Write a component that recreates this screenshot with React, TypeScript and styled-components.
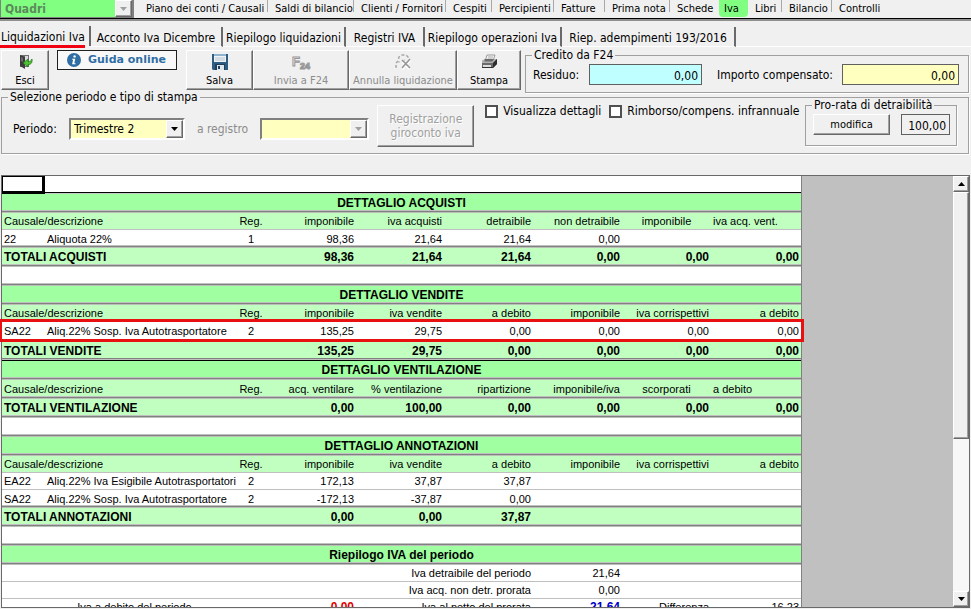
import React from "react";
import styled, { createGlobalStyle, css } from "styled-components";

const UI_FONT = `"DejaVu Sans Condensed", "DejaVu Sans", sans-serif`;
const GRID_FONT = `"Liberation Sans", Arial, sans-serif`;

const GlobalStyle = createGlobalStyle`
  *, *::before, *::after { box-sizing: border-box; }
  body { margin: 0; background: #f0f0f0; color: #000; font: 12px/16px ${UI_FONT}; }
  button, input, select { font: inherit; color: inherit; border-radius: 0; margin: 0; }
`;

const raised = css`
  border: 1px solid;
  border-color: #fff #696969 #696969 #fff;
  box-shadow: inset -1px -1px 0 #a0a0a0;
  background: #f0f0f0;
`;

const Page = styled.main`
  height: 100vh;
  display: flex;
  flex-direction: column;
  overflow: hidden;
`;

/* ---- top navigation ---- */

const TopBar = styled.header`
  display: flex;
  height: 21px;
  padding-bottom: 3px;
  border-bottom: 2px solid #909090;
  box-shadow: inset 0 -1px 0 #000;
  flex: none;
`;

const SelectBox = styled.div<{ $width: number }>`
  position: relative;
  width: ${(p) => p.$width}px;
  height: 22px;
  flex: none;
`;

const Select = styled.select`
  appearance: none;
  width: 100%;
  height: 100%;
  padding: 0 20px 0 3px;
  border: 2px solid;
  border-color: #808080 #fff #fff #808080;
  background: #ffffc0;
  opacity: 1;
`;

const SelectArrow = styled.span<{ $muted?: boolean }>`
  ${raised}
  position: absolute;
  top: 2px;
  right: 2px;
  bottom: 2px;
  width: 17px;
  display: grid;
  place-items: center;
  pointer-events: none;
  color: ${(p) => (p.$muted ? "#a0a0a0" : "#000")};
`;

const SectionBox = styled(SelectBox)`
  height: 18px;
`;

const SectionSelect = styled(Select)`
  border-width: 0 2px 1px 1px;
  border-color: #808080;
  background: #80ff80;
  color: #5c8a5c;
  font-weight: bold;
  padding-left: 4px;
`;

const SectionArrow = styled(SelectArrow)`
  top: 0;
  bottom: 1px;
`;

const MainNav = styled.nav`
  display: grid;
  grid-template-columns: 129px 86px 92px 46px 62px 51px 65px 49px 29px 34px 50px 60px;
  margin-left: 5px;
  font-size: 11px;
`;

const NavLink = styled.a<{ $active?: boolean; $divider?: boolean }>`
  position: relative;
  height: 17px;
  padding-left: ${(p) => (p.$active ? 5 : 7)}px;
  color: #000;
  text-decoration: none;
  white-space: nowrap;
  line-height: 17px;
  ${(p) =>
    p.$active &&
    css`
      background: #80ff80;
      border-radius: 0 0 4px 4px;
    `}
  ${(p) =>
    p.$divider &&
    css`
      &::after {
        content: "";
        position: absolute;
        top: 0;
        right: 0;
        width: 1px;
        height: 12px;
        background: #a8a8a8;
      }
    `}
`;

/* ---- secondary tabs ---- */

const TabBar = styled.nav`
  display: grid;
  grid-template-columns: 91px 132px 123px 79px 137px 174px 1fr;
  height: 28px;
  padding-top: 5px;
  flex: none;
`;

const Tab = styled.button<{ $active?: boolean }>`
  position: relative;
  height: 20px;
  margin-top: ${(p) => (p.$active ? 0 : 1)}px;
  padding: ${(p) => (p.$active ? "2px 0 0 1px" : "3px 0 0")};
  text-align: ${(p) => (p.$active ? "left" : "center")};
  border: 0;
  border-right: 2px solid #696969;
  border-bottom: ${(p) => (p.$active ? 0 : 1)}px solid #fff;
  background: #f0f0f0;
  line-height: 15px;
  white-space: nowrap;
  ${(p) =>
    p.$active &&
    css`
      &::after {
        content: "";
        position: absolute;
        left: 0;
        top: 19px;
        width: 85px;
        height: 3px;
        background: #f00010;
      }
    `}
`;

const TabFiller = styled.span`
  height: 20px;
  margin-top: 1px;
  border-bottom: 1px solid #fff;
`;

/* ---- toolbar ---- */

const Toolbar = styled.div`
  display: flex;
  align-items: flex-start;
  padding: 1px 2px 0 1px;
  flex: none;
`;

const ToolButton = styled.button<{ $width: number }>`
  ${raised}
  display: flex;
  flex-direction: column;
  align-items: center;
  justify-content: space-between;
  width: ${(p) => p.$width}px;
  height: 40px;
  padding: 3px 0 1px;
  font-size: 11px;
  line-height: 15px;
  white-space: nowrap;
  flex: none;
  &:disabled {
    color: #8c8c8c;
  }
`;

const GuideLink = styled.a`
  display: flex;
  align-items: center;
  gap: 7px;
  width: 120px;
  height: 20px;
  margin: 0 9px 0 8px;
  padding-left: 9px;
  border: 1px solid #202020;
  background: #f8f8f8;
  color: #2f6ea5;
  font: bold 11px/18px "DejaVu Sans", sans-serif;
  text-decoration: none;
  white-space: nowrap;
  flex: none;
`;

const Group = styled.fieldset`
  min-width: 0;
  margin: 0;
  padding: 0;
  border: 1px solid #a0a0a0;
  box-shadow: 1px 1px 0 #fff;
`;

const Legend = styled.legend`
  margin-left: 6px;
  padding: 0 2px;
  line-height: 9px;
  white-space: nowrap;
`;

const CreditGroup = styled(Group)`
  flex: 1;
  height: 42px;
  margin: 1px 0 0 4px;
`;

const CreditRow = styled.div`
  display: flex;
  align-items: center;
  padding: 4px 9px 0 7px;
`;

const FieldLabel = styled.label<{ $muted?: boolean }>`
  white-space: nowrap;
  color: ${(p) => (p.$muted ? "#8c8c8c" : "#000")};
`;

const AmountInput = styled.input<{ $bg: string; $width: number }>`
  width: ${(p) => p.$width}px;
  height: 21px;
  padding: 2px 3px 0;
  border: 1px solid #606060;
  background: ${(p) => p.$bg};
  text-align: right;
`;

const CreditInput = styled(AmountInput)`
  flex: 0 1 auto;
  &:last-child {
    margin-left: auto;
  }
`;

const ResidualLabel = styled(FieldLabel)`
  width: 56px;
`;

const OffsetLabel = styled(FieldLabel)`
  margin-left: 15px;
`;

/* ---- period filters ---- */

const PeriodGroup = styled(Group)`
  height: 61px;
  margin: 0 2px 0 1px;
  flex: none;
`;

const PeriodRow = styled.div`
  display: flex;
  align-items: flex-start;
  padding: 3px 11px 0;
`;

const FieldPair = styled.div<{ $end: number }>`
  display: flex;
  align-items: center;
  gap: 12px;
  margin: 13px ${(p) => p.$end}px 0 0;
`;

const JournalButton = styled.button`
  ${raised}
  width: 97px;
  height: 42px;
  margin-right: 3px;
  padding: 0;
  line-height: 14px;
  color: #a0a0a0;
  text-shadow: 1px 1px 0 #fff;
`;

const CheckLabel = styled.label`
  display: flex;
  align-items: center;
  gap: 5px;
  margin: -2px 0 0 8px;
  white-space: nowrap;
  height: 16px;
`;

const CheckBox = styled.input`
  appearance: none;
  width: 13px;
  height: 13px;
  border: 2px solid #505050;
  background: #fff;
  flex: none;
  &:checked {
    background: #505050;
    box-shadow: inset 0 0 0 2px #fff;
  }
`;

const ProRataGroup = styled(Group)`
  width: 152px;
  height: 45px;
  margin: -4px 0 0 auto;
  flex: none;
`;

const ProRataRow = styled.div`
  display: flex;
  justify-content: space-between;
  padding: 4px 6px 0 7px;
`;

const EditButton = styled.button`
  ${raised}
  width: 77px;
  height: 21px;
  padding: 0;
  font-size: 11px;
`;

/* ---- report grid ---- */

const Panel = styled.section`
  display: flex;
  flex: 1;
  min-height: 0;
  margin: 21px 1px 1px;
  border: 1px solid #696969;
  background: #c0c0c0;
  overflow-x: visible;
  overflow-y: clip;
`;

const Sheet = styled.div`
  flex: 1;
  min-width: 0;
`;

const Grid = styled.table`
  width: 799px;
  table-layout: fixed;
  border-collapse: separate;
  border-spacing: 0;
  border-right: 1px solid #808080;
  background: #fff;
  font: 11px/16px ${GRID_FONT};
`;

const Col = styled.col<{ $w: number }>`
  width: ${(p) => p.$w}px;
`;

type Kind = "first" | "blank" | "title" | "head" | "data" | "total";
type Rule = "line" | "double" | "black" | "solid" | "none";

const rowBg: Record<Kind, string> = {
  first: "#fff",
  blank: "#fff",
  title: "#a0ffa0",
  head: "#c0ffc0",
  data: "#fff",
  total: "#c0ffc0",
};

const rules: Record<Rule, ReturnType<typeof css>> = {
  none: css``,
  line: css`
    border-bottom: 1px solid #c0c0c0;
  `,
  double: css`
    border-bottom: 1px solid #b8c0b8;
    box-shadow: inset 0 -1px 0 #808080, inset 0 -2px 0 #c0c0c0;
  `,
  solid: css`
    border-bottom: 1px solid #c0d0c0;
    box-shadow: inset 0 -1px 0 #000;
  `,
  black: css`
    border-bottom: 1px solid #000;
    box-shadow: inset 0 -1px 0 #c0c0c0, inset 0 -2px 0 #808080;
  `,
};

const Row = styled.tr<{ $kind: Kind; $rule: Rule; $h: number; $marked?: boolean; $spaced?: boolean }>`
  background: ${(p) => rowBg[p.$kind]};
  font-weight: ${(p) => (p.$kind === "title" || p.$kind === "total" ? "bold" : "normal")};
  font-size: ${(p) => (p.$kind === "title" || p.$kind === "total" ? 12 : 11)}px;
  ${(p) =>
    p.$marked &&
    css`
      position: relative;
      z-index: 1;
      outline: 3px solid #e81010;
    `}
  > td, > th {
    height: ${(p) => p.$h}px;
    ${(p) => rules[p.$rule]}
    ${(p) =>
      p.$spaced &&
      css`
        border-top: 2px solid #c0ffc0;
      `}
  }
`;

const cell = css<{ $align?: string; $color?: string }>`
  padding: 0 2px;
  font-weight: inherit;
  white-space: nowrap;
  text-align: ${(p) => p.$align ?? "right"};
  ${(p) => p.$color && `color: ${p.$color}; font-weight: bold; font-size: 12px;`}
`;

const Td = styled.td<{ $align?: string; $color?: string }>`
  ${cell}
`;

const Th = styled.th<{ $align?: string }>`
  ${cell}
`;

const ActiveCell = styled.td`
  padding: 0;
  && {
    border: 1px solid #000;
    border-right-width: 3px;
    border-bottom-width: 2px;
  }
`;

/* ---- scroll bar ---- */

const ScrollBar = styled.div`
  display: flex;
  flex-direction: column;
  width: 16px;
  background: #f7f7f7;
  flex: none;
`;

const ScrollButton = styled.button`
  ${raised}
  height: 16px;
  padding: 0;
  display: grid;
  place-items: center;
  flex: none;
`;

const ScrollTrack = styled.div`
  flex: 1;
  min-height: 0;
`;

const ScrollThumb = styled.div`
  ${raised}
  height: 62%;
`;

/* ---- icons ---- */

const ArrowDown = () => (
  <svg width="7" height="4" viewBox="0 0 7 4" aria-hidden="true">
    <path d="M0 0h7L3.500 4z" fill="currentColor" />
  </svg>
);

const ArrowUp = () => (
  <svg width="7" height="4" viewBox="0 0 7 4" aria-hidden="true">
    <path d="M0 4h7L3.500 0z" fill="currentColor" />
  </svg>
);

const ExitIcon = () => (
  <svg width="16" height="16" viewBox="0 0 16 16" aria-hidden="true">
    <path d="M3 1h9v12H3z" fill="#707070" />
    <path d="M8 2h3v10H8z" fill="#d8dce0" />
    <path d="M3 1l5 2v12l-5-3z" fill="#3c3c3c" />
    <path d="M4 3l2 1v4L4 7z" fill="#6c6c6c" />
    <path d="M15 5c.5 4-1 5.500-4 5.600V13L6 9l5-4v2.700C13 7.600 14 7 15 5z" fill="#4fc032" stroke="#1e7414" strokeWidth=".7" />
  </svg>
);

const InfoIcon = () => (
  <svg width="14" height="14" viewBox="0 0 14 14" aria-hidden="true">
    <circle cx="7" cy="7" r="7" fill="#2f6ea5" />
    <circle cx="7.600" cy="3.400" r="1.200" fill="#fff" />
    <path d="M5.200 5.800h3.100l-1 4.400h1.200v1H5.100l1-4.400h-.9z" fill="#fff" />
  </svg>
);

const SaveIcon = () => (
  <svg width="16" height="16" viewBox="0 0 16 16" aria-hidden="true">
    <path d="M0 0h16v16H1l-1-1z" fill="#2d5d83" />
    <path d="M2 0h12v8H2z" fill="#eef3f7" />
    <path d="M2 0h12v2H2z" fill="#8fb4cf" />
    <path d="M3 4h10M3 6h10" stroke="#b6c4cf" strokeWidth="1" />
    <path d="M3 10h10v6H3z" fill="#1f3f5c" />
    <path d="M5 11h7v5H5z" fill="#dfe6ec" />
    <path d="M6 12h2v3H6z" fill="#1f3f5c" />
  </svg>
);

const F24Text = styled.text`
  font: bold 13px ${GRID_FONT};
  fill: #f4f4f4;
  stroke: #969696;
  stroke-width: 1px;
`;

const F24SmallText = styled(F24Text)`
  font-size: 9px;
`;

const F24Icon = () => (
  <svg width="20" height="17" viewBox="0 0 20 17" aria-hidden="true">
    <F24Text x="1" y="12">F</F24Text>
    <F24SmallText x="9" y="15">24</F24SmallText>
  </svg>
);

const CancelIcon = () => (
  <svg width="18" height="16" viewBox="0 0 18 16" aria-hidden="true">
    <path d="M3 13H2V9l2-2 1-4 3-2h4l3 3" fill="none" stroke="#a8a8a8" strokeWidth="1.500" strokeDasharray="3 2" />
    <path d="M4 8h5l2-3" fill="none" stroke="#b8b8b8" strokeDasharray="2 1" />
    <path d="M8 7l8 8M16 6l-8 9" stroke="#fff" strokeWidth="3" />
    <path d="M8 6l8 8M16 5l-8 9" stroke="#969696" strokeWidth="1.600" />
  </svg>
);

const PrinterIcon = () => (
  <svg width="17" height="16" viewBox="0 0 17 16" aria-hidden="true">
    <path d="M6 1h8l-2 6H4z" fill="#f4f4f4" stroke="#777" strokeWidth=".7" />
    <path d="M7 3h5M6.500 5h5" stroke="#999" strokeWidth=".8" />
    <path d="M1 7l3-2h9l3 0v5l-4 4H1z" fill="#6a6a6a" />
    <path d="M1 7l3-2-.6 2.500h8L13 5h3l-4 4H1z" fill="#b0b0b0" />
    <path d="M12 9l4-4v5l-4 4z" fill="#2c2c2c" />
    <path d="M2 11h8v2H2z" fill="#dcdcdc" />
    <path d="M1 13h11v1H1z" fill="#303030" />
  </svg>
);

/* ---- data ---- */

const mainNav = ["Piano dei conti / Causali", "Saldi di bilancio", "Clienti / Fornitori", "Cespiti", "Percipienti", "Fatture", "Prima nota", "Schede", "Iva", "Libri", "Bilancio", "Controlli"];
const noDivider = ["Schede", "Iva", "Controlli"];

const tabs = ["Liquidazioni Iva", "Acconto Iva Dicembre", "Riepilogo liquidazioni", "Registri IVA", "Riepilogo operazioni Iva", "Riep. adempimenti 193/2016"];

interface Section {
  title: string;
  heads: string[];
  aligns?: string[];
  headRule?: Rule;
  rows: { cells: string[]; marked?: boolean }[];
  total: string[];
  blank: boolean;
}

const SALES = ["imponibile", "iva vendite", "a debito", "imponibile", "iva corrispettivi", "a debito"];
const SPREAD = ["right", "right", "right", "right", "center", "left"];

const sections: Section[] = [
  {
    title: "DETTAGLIO ACQUISTI",
    heads: ["imponibile", "iva acquisti", "detraibile", "non detraibile", "imponibile", "iva acq. vent."],
    aligns: SPREAD,
    rows: [{ cells: ["22", "Aliquota 22%", "1", "98,36", "21,64", "21,64", "0,00", "", ""] }],
    total: ["TOTALI ACQUISTI", "98,36", "21,64", "21,64", "0,00", "0,00", "0,00"],
    blank: true,
  },
  {
    title: "DETTAGLIO VENDITE",
    heads: SALES,
    rows: [{ cells: ["SA22", "Aliq.22% Sosp. Iva Autotrasportatore", "2", "135,25", "29,75", "0,00", "0,00", "0,00", "0,00"], marked: true }],
    total: ["TOTALI VENDITE", "135,25", "29,75", "0,00", "0,00", "0,00", "0,00"],
    blank: false,
  },
  {
    title: "DETTAGLIO VENTILAZIONE",
    heads: ["acq. ventilare", "% ventilazione", "ripartizione", "imponibile/iva", "scorporati", "a debito"],
    aligns: SPREAD,
    headRule: "double",
    rows: [],
    total: ["TOTALI VENTILAZIONE", "0,00", "100,00", "0,00", "0,00", "0,00", "0,00"],
    blank: true,
  },
  {
    title: "DETTAGLIO ANNOTAZIONI",
    heads: SALES,
    rows: [
      { cells: ["EA22", "Aliq.22% Iva Esigibile Autotrasportatori", "2", "172,13", "37,87", "37,87", "", "", ""] },
      { cells: ["SA22", "Aliq.22% Sosp. Iva Autotrasportatore", "2", "-172,13", "-37,87", "0,00", "", "", ""] },
    ],
    total: ["TOTALI ANNOTAZIONI", "0,00", "0,00", "37,87", "", "", ""],
    blank: true,
  },
];

const cellAlign = (i: number) => (i < 2 ? "left" : i === 2 ? "center" : "right");

const SectionRows = ({ s }: { s: Section }) => (
  <tbody>
    <Row $kind="title" $rule="double" $h={19}>
      <Th colSpan={9} $align="center">{s.title}</Th>
    </Row>
    <Row $kind="head" $rule={s.headRule ?? "line"} $h={s.headRule ? 19 : 17}>
      <Th colSpan={2} $align="left">Causale/descrizione</Th>
      <Th $align="center">Reg.</Th>
      {s.heads.map((h, i) => (
        <Th key={i} $align={s.aligns?.[i]}>{h}</Th>
      ))}
    </Row>
    {s.rows.map((r, n) => {
      const last = n === s.rows.length - 1;
      return (
        <Row key={n} $kind="data" $marked={r.marked} $rule={r.marked ? "none" : last ? "double" : "line"} $h={last && !r.marked ? 18 : 17}>
          {r.cells.map((c, i) => (
            <Td key={i} $align={cellAlign(i)}>{c}</Td>
          ))}
        </Row>
      );
    })}
    <Row $kind="total" $rule={s.blank ? "double" : "black"} $h={s.blank ? 19 : 22} $spaced={s.rows.some((r) => r.marked)}>
      {s.total.map((c, i) => (
        <Td key={i} colSpan={i === 0 ? 3 : 1} $align={i === 0 ? "left" : "right"}>{c}</Td>
      ))}
    </Row>
    {s.blank && (
      <Row $kind="blank" $rule="double" $h={19}>
        <Td colSpan={9} />
      </Row>
    )}
  </tbody>
);

export default function App() {
  return (
    <Page>
      <GlobalStyle />
      <TopBar>
        <SectionBox $width={134}>
          <SectionSelect aria-label="Quadri" disabled>
            <option>Quadri</option>
          </SectionSelect>
          <SectionArrow $muted><ArrowDown /></SectionArrow>
        </SectionBox>
        <MainNav>
          {mainNav.map((n) => (
            <NavLink key={n} href="#" $active={n === "Iva"} $divider={!noDivider.includes(n)}>{n}</NavLink>
          ))}
        </MainNav>
      </TopBar>

      <TabBar>
        {tabs.map((t, i) => (
          <Tab key={t} type="button" $active={i === 0}>{t}</Tab>
        ))}
        <TabFiller />
      </TabBar>

      <Toolbar>
        <ToolButton type="button" $width={48}><ExitIcon />Esci</ToolButton>
        <GuideLink href="#"><InfoIcon />Guida online</GuideLink>
        <ToolButton type="button" $width={67}><SaveIcon />Salva</ToolButton>
        <ToolButton type="button" $width={96} disabled><F24Icon />Invia a F24</ToolButton>
        <ToolButton type="button" $width={108} disabled><CancelIcon />Annulla liquidazione</ToolButton>
        <ToolButton type="button" $width={64}><PrinterIcon />Stampa</ToolButton>
        <CreditGroup>
          <Legend>Credito da F24</Legend>
          <CreditRow>
            <ResidualLabel htmlFor="residuo">Residuo:</ResidualLabel>
            <CreditInput id="residuo" $bg="#c0ffff" $width={113} defaultValue="0,00" />
            <OffsetLabel htmlFor="compensato">Importo compensato:</OffsetLabel>
            <CreditInput id="compensato" $bg="#ffffc0" $width={117} defaultValue="0,00" />
          </CreditRow>
        </CreditGroup>
      </Toolbar>

      <PeriodGroup>
        <Legend>Selezione periodo e tipo di stampa</Legend>
        <PeriodRow>
          <FieldPair $end={12}>
            <FieldLabel htmlFor="periodo">Periodo:</FieldLabel>
            <SelectBox $width={116}>
              <Select id="periodo"><option>Trimestre 2</option></Select>
              <SelectArrow><ArrowDown /></SelectArrow>
            </SelectBox>
          </FieldPair>
          <FieldPair $end={8}>
            <FieldLabel htmlFor="registro" $muted>a registro</FieldLabel>
            <SelectBox $width={109}>
              <Select id="registro" disabled><option></option></Select>
              <SelectArrow $muted><ArrowDown /></SelectArrow>
            </SelectBox>
          </FieldPair>
          <JournalButton type="button" disabled>Registrazione<br />giroconto iva</JournalButton>
          <CheckLabel><CheckBox type="checkbox" />Visualizza dettagli</CheckLabel>
          <CheckLabel><CheckBox type="checkbox" />Rimborso/compens. infrannuale</CheckLabel>
          <ProRataGroup>
            <Legend>Pro-rata di detraibilità</Legend>
            <ProRataRow>
              <EditButton type="button">modifica</EditButton>
              <AmountInput aria-label="Pro-rata" $bg="#f0f0f0" $width={49} defaultValue="100,00" />
            </ProRataRow>
          </ProRataGroup>
        </PeriodRow>
      </PeriodGroup>

      <Panel>
        <Sheet>
          <Grid>
            <colgroup>
              {[43, 190, 32, 89, 88, 89, 89, 89, 90].map((w, i) => (
                <Col key={i} $w={w} />
              ))}
            </colgroup>
            <tbody>
              <Row $kind="first" $rule="solid" $h={18}>
                <ActiveCell />
                <Td colSpan={8} />
              </Row>
            </tbody>
            {sections.map((s) => (
              <SectionRows key={s.title} s={s} />
            ))}
            <tbody>
              <Row $kind="title" $rule="double" $h={19}>
                <Th colSpan={9} $align="center">Riepilogo IVA del periodo</Th>
              </Row>
              <Row $kind="data" $rule="line" $h={17}>
                <Td colSpan={6}>Iva detraibile del periodo</Td>
                <Td>21,64</Td>
                <Td colSpan={2} />
              </Row>
              <Row $kind="data" $rule="line" $h={17}>
                <Td colSpan={6}>Iva acq. non detr. prorata</Td>
                <Td>0,00</Td>
                <Td colSpan={2} />
              </Row>
              <Row $kind="data" $rule="line" $h={17}>
                <Td colSpan={3} $align="center">Iva a debito del periodo</Td>
                <Td $color="#e00000">0,00</Td>
                <Td colSpan={2}>Iva al netto del prorata</Td>
                <Td $color="#0000c8">21,64</Td>
                <Td>Differenza</Td>
                <Td>16,23</Td>
              </Row>
            </tbody>
          </Grid>
        </Sheet>
        <ScrollBar>
          <ScrollButton type="button" aria-label="Su"><ArrowUp /></ScrollButton>
          <ScrollTrack><ScrollThumb /></ScrollTrack>
          <ScrollButton type="button" aria-label="Giù"><ArrowDown /></ScrollButton>
        </ScrollBar>
      </Panel>
    </Page>
  );
}
